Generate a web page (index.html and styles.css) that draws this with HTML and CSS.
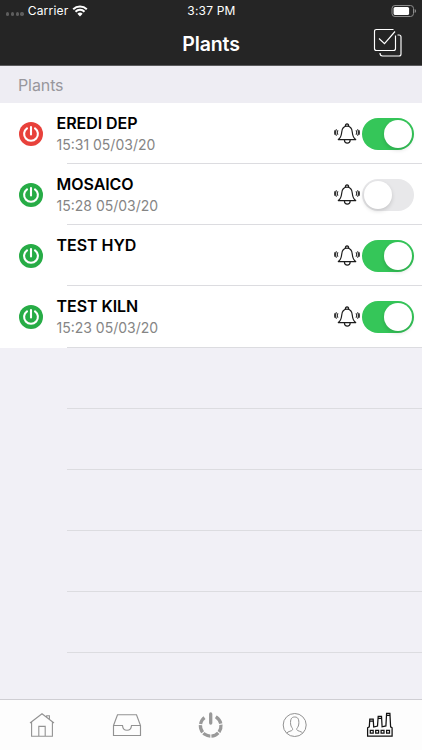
FILE: index.html
```html
<!DOCTYPE html>
<html lang="en">
<head>
<meta charset="utf-8">
<title>Plants</title>
<link rel="stylesheet" href="styles.css">
</head>
<body>
<svg class="defs" aria-hidden="true">
  <symbol id="power" viewBox="0 0 24 24">
    <circle cx="12" cy="12" r="12" fill="currentColor"/>
    <path d="M8 6.300a6.900 6.900 0 1 0 8 0M12 5v7.500" fill="none" stroke="#fff" stroke-width="2.100" stroke-linecap="round"/>
  </symbol>
  <symbol id="bell" viewBox="0 0 26 22">
    <path d="M4.300 16.600c2.900-2 3-4 3.400-7.300C8 5.500 10 3.200 13 3.200s5 2.300 5.300 6.100c.4 3.300.5 5.300 3.400 7.300zM11.300 3.200c0-3 3.400-3 3.400 0M10.400 17c.2 4.200 5.600 4.200 5.800 0" fill="none" stroke="#1c1c1c" stroke-width="1.200" stroke-linejoin="round"/>
    <path d="M4 7.200q-1.300 2.300 0 4.600M2.500 6.200q-1.900 3.300 0 6.600M1 7.200q-.8 2.300 0 4.600M22 7.200q1.300 2.300 0 4.600M23.500 6.200q1.900 3.300 0 6.600M25 7.200q.8 2.300 0 4.600" fill="none" stroke="#333" stroke-width="1.100"/>
  </symbol>
</svg>
<header class="top">
  <div class="status">
    <div class="carrier">
      <span class="dots"><i></i><i></i><i></i><i></i></span>
      <span>Carrier</span>
      <svg class="wifi" width="16" height="12" viewBox="0 0 16 12"><path d="M1.200 4.300a9.700 9.700 0 0 1 13.600 0M3.500 6.700a6.400 6.400 0 0 1 9 0" fill="none" stroke="#fff" stroke-width="2"/><path d="M8 11.400 5.400 8.800a3.700 3.700 0 0 1 5.200 0z" fill="#fff"/></svg>
    </div>
    <span class="time">3:37 PM</span>
    <svg class="battery" width="26" height="12" viewBox="0 0 26 12"><rect x="1" y=".5" width="21.500" height="11" rx="3" fill="none" stroke="#8c8c8c"/><rect x="2.600" y="2" width="15.500" height="8" rx="1.600" fill="#fff"/><path d="M23.700 4v4q1.400-.6 1.400-2t-1.400-2" fill="#8c8c8c"/></svg>
  </div>
  <div class="nav">
    <h1>Plants</h1>
    <svg class="check" width="30" height="30" viewBox="0 0 30 30"><path d="M20.500 1.500H3.500Q1.500 1.500 1.500 3.500v17q0 2 2 2h17q2 0 2-2V7.500M6 10.500l5.500 5.200L22 3.500M24.500 7h1.500q2 0 2 2v17q0 2-2 2H9.500q-2.500 0-2.500-3" fill="none" stroke="#fff" stroke-width="1.150"/></svg>
  </div>
</header>
<main>
  <h2 class="section">Plants</h2>
  <ul class="list">
    <li class="row plant"><svg class="power red"><use href="#power"/></svg><div class="text"><b>EREDI DEP</b><span>15:31 05/03/20</span></div><svg class="bell"><use href="#bell"/></svg><span class="toggle on"></span></li>
    <li class="row plant"><svg class="power"><use href="#power"/></svg><div class="text"><b>MOSAICO</b><span>15:28 05/03/20</span></div><svg class="bell"><use href="#bell"/></svg><span class="toggle"></span></li>
    <li class="row plant"><svg class="power"><use href="#power"/></svg><div class="text"><b>TEST HYD</b><span></span></div><svg class="bell"><use href="#bell"/></svg><span class="toggle on"></span></li>
    <li class="row plant"><svg class="power"><use href="#power"/></svg><div class="text"><b>TEST KILN</b><span>15:23 05/03/20</span></div><svg class="bell"><use href="#bell"/></svg><span class="toggle on"></span></li>
    <li class="row"></li><li class="row"></li><li class="row"></li><li class="row"></li><li class="row"></li>
  </ul>
</main>
<nav class="tabs">
  <svg width="26" height="26" viewBox="0 0 26 26"><path d="M1 11 13 1.700 25 11M2.600 10v14.200h20.800V10M9.800 24V14.400h6.400V24M17.700 5V3.800h2.700v3.600" fill="none" stroke="#929292" stroke-width="1.100"/></svg>
  <svg width="30" height="26" viewBox="0 0 30 26"><path d="M1.500 13.500 5.500 2.700h19l4 10.800v10h-27zM1.500 13.500h9c.4 6.300 8.600 6.300 9 0h9" fill="none" stroke="#929292" stroke-width="1.150"/></svg>
  <svg width="26" height="26" viewBox="0 0 26 26"><g fill="none" stroke="#999" stroke-width="3.300"><circle cx="12.700" cy="13.800" r="10.300" pathLength="360" stroke-dasharray="43 6 43 6 43 6 43 6 43 6 43 66" transform="rotate(-55 12.700 13.800)"/><path d="M12.700 2v9" stroke-linecap="round"/></g></svg>
  <svg width="26" height="26" viewBox="0 0 26 26"><g fill="none" stroke="#929292" stroke-width="1"><circle cx="12.700" cy="13" r="11.500"/><path d="M4.700 21.200c1-2 5.500-2 6-3.600.3-1.500-1.900-2.300-2.100-5.600C8.300 7.500 9.200 5 12.700 5s4.400 2.500 4.100 7c-.2 3.300-2.400 4.100-2.100 5.600.5 1.600 5 1.600 6 3.600"/></g></svg>
  <svg width="28" height="26" viewBox="0 0 28 26"><g fill="none" stroke="#111" stroke-width="1.250"><path d="M1.600 24.200v-8.400l1.700-1 .5-7.600h3.400l.5 7.800 3.800-.9.700-9.800h3.300l.6 10.500 3.800-.9.700-12.500h3.300l.7 13.400 1.500 1v8.400zM3.500 9.200h4M11.900 6.300h4M20.300 3.300h4"/><path d="M4.300 18.300h2.900v2.900H4.300zM9.700 18.300h2.900v2.900H9.700zM15.100 18.300H18v2.900h-2.900zM20.600 18.300h2.900v2.900h-2.900z"/></g></svg>
</nav>
</body>
</html>
```
FILE: styles.css
```css
* { box-sizing: border-box; }
body {
  margin: 0;
  width: 422px;
  height: 750px;
  overflow: hidden;
  display: flex;
  flex-direction: column;
  background: #f1f0f6;
  font-family: Inter, "Liberation Sans", sans-serif;
}
.defs { position: absolute; width: 0; height: 0; }
.top {
  height: 66px;
  flex: none;
  background: #252525;
  color: #fff;
  border-bottom: 1px solid #5b5b5d;
}
.status {
  height: 21px;
  display: grid;
  grid-template-columns: 1fr auto 1fr;
  align-items: center;
  padding: 0 5px 0 6px;
  font-size: 12px;
  letter-spacing: .2px;
}
.carrier { display: flex; align-items: center; }
.dots { display: flex; gap: 1.500px; margin: 7px 4px 0 0; }
.dots i { width: 3.300px; height: 3.300px; border-radius: 50%; background: #5e5e5e; }
.wifi { margin-left: 4px; }
.battery { justify-self: end; }
.nav {
  height: 44px;
  display: grid;
  grid-template-columns: 1fr auto 1fr;
  align-items: center;
  padding: 0 19px;
}
.nav h1 {
  grid-column: 2;
  margin: 1px 0 0;
  font-size: 19.500px;
  font-weight: 600;
  line-height: 24px;
  letter-spacing: -.1px;
}
.check { justify-self: end; }
main { flex: 1; min-height: 0; overflow: hidden; }
.section {
  margin: 0;
  height: 37px;
  padding-left: 18px;
  background: #eeedf3;
  color: #98979c;
  font-size: 16px;
  font-weight: 400;
  line-height: 38px;
  letter-spacing: -.1px;
}
.list { list-style: none; margin: 0; padding: 0; }
.row {
  height: 61.150px;
  background: linear-gradient(#dcdce0, #dcdce0) 67px 100% / 355px 1px no-repeat;
}
.plant {
  display: flex;
  align-items: center;
  padding: 0 8.500px 0 19px;
  background-color: #fff;
}
.power { width: 24px; height: 24px; flex: none; color: #27ac46; }
.power.red { color: #e8413b; }
.text { flex: 1; margin-left: 13.500px; display: flex; flex-direction: column; color: #000; }
.text b { font-size: 16px; font-weight: 600; line-height: 22px; letter-spacing: -.05px; }
.text span { height: 21px; font-size: 14px; line-height: 22px; color: #858585; }
.bell { width: 26px; height: 22px; margin-right: 2px; }
.toggle {
  width: 52px;
  height: 32px;
  padding: 2px;
  border-radius: 16px;
  background: #e8e8ea;
  display: flex;
}
.toggle::before {
  content: "";
  width: 28px;
  height: 28px;
  border-radius: 50%;
  background: #fff;
  box-shadow: 0 2px 4px rgba(0, 0, 0, .15);
}
.toggle.on { background: #35c659; justify-content: flex-end; }
.tabs {
  height: 51px;
  flex: none;
  display: grid;
  grid-template-columns: repeat(5, 1fr);
  place-items: center;
  background: #fdfdfd;
  border-top: 1px solid #cfced3;
}
```
